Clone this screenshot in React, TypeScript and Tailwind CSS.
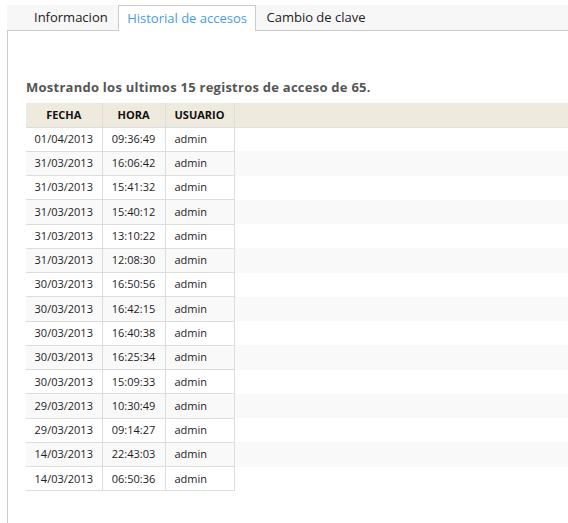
import React from 'react';

const rows: [string, string, string][] = [
  ['01/04/2013', '09:36:49', 'admin'],
  ['31/03/2013', '16:06:42', 'admin'],
  ['31/03/2013', '15:41:32', 'admin'],
  ['31/03/2013', '15:40:12', 'admin'],
  ['31/03/2013', '13:10:22', 'admin'],
  ['31/03/2013', '12:08:30', 'admin'],
  ['30/03/2013', '16:50:56', 'admin'],
  ['30/03/2013', '16:42:15', 'admin'],
  ['30/03/2013', '16:40:38', 'admin'],
  ['30/03/2013', '16:25:34', 'admin'],
  ['30/03/2013', '15:09:33', 'admin'],
  ['29/03/2013', '10:30:49', 'admin'],
  ['29/03/2013', '09:14:27', 'admin'],
  ['14/03/2013', '22:43:03', 'admin'],
  ['14/03/2013', '06:50:36', 'admin'],
];

export default function App() {
  return (
    <div className="w-[568px] h-[523px] bg-white overflow-hidden pt-[5px] pl-[7px] font-['Open_Sans',sans-serif] text-[#222]">
      {/* Tabs */}
      <div className="flex h-[26px] bg-[#f7f7f7] border-b border-[#cccccc] pl-[17px] text-[13px]">
        <div className="px-[10px] leading-[25px] text-[#222]">Informacion</div>
        <div className="px-[8.5px] leading-[25px] bg-white border border-b-0 border-[#cccccc] h-[26px] text-[#4a9be8]">
          Historial de accesos
        </div>
        <div className="px-[10px] leading-[25px] text-[#222]">Cambio de clave</div>
      </div>

      {/* Panel */}
      <div className="border-l border-[#cccccc] h-[500px] pl-[18px] pt-[46px]">
        <h2 className="text-[13px] font-bold text-[#555] leading-[20px] tracking-[0.25px] mb-[6px]">
          Mostrando los ultimos 15 registros de acceso de 65.
        </h2>
        <table className="w-[542px] border-collapse text-[11px] table-fixed text-[#1c1c24]">
          <colgroup>
            <col className="w-[76px]" />
            <col className="w-[63px]" />
            <col className="w-[69px]" />
            <col />
          </colgroup>
          <thead>
            <tr className="bg-[#eeebde] h-[24px] border-b border-[#e2e0d8]">
              <th className="border-r border-[#dddddd] font-bold text-[#111] text-center">FECHA</th>
              <th className="border-r border-[#dddddd] font-bold text-[#111] text-center">HORA</th>
              <th className="border-r border-[#dddddd] font-bold text-[#111] text-center">USUARIO</th>
              <th></th>
            </tr>
          </thead>
          <tbody>
            {rows.map(([fecha, hora, usuario], i) => (
              <tr key={i} className={`h-[24.27px] ${i % 2 === 1 ? 'bg-[#f9f9f9]' : 'bg-white'}`}>
                <td className="border border-l-0 border-[#dddddd] text-center">{fecha}</td>
                <td className="border border-[#dddddd] text-center">{hora}</td>
                <td className="border border-[#dddddd] pl-[9px]">{usuario}</td>
                <td></td>
              </tr>
            ))}
          </tbody>
        </table>
      </div>
    </div>
  );
}
